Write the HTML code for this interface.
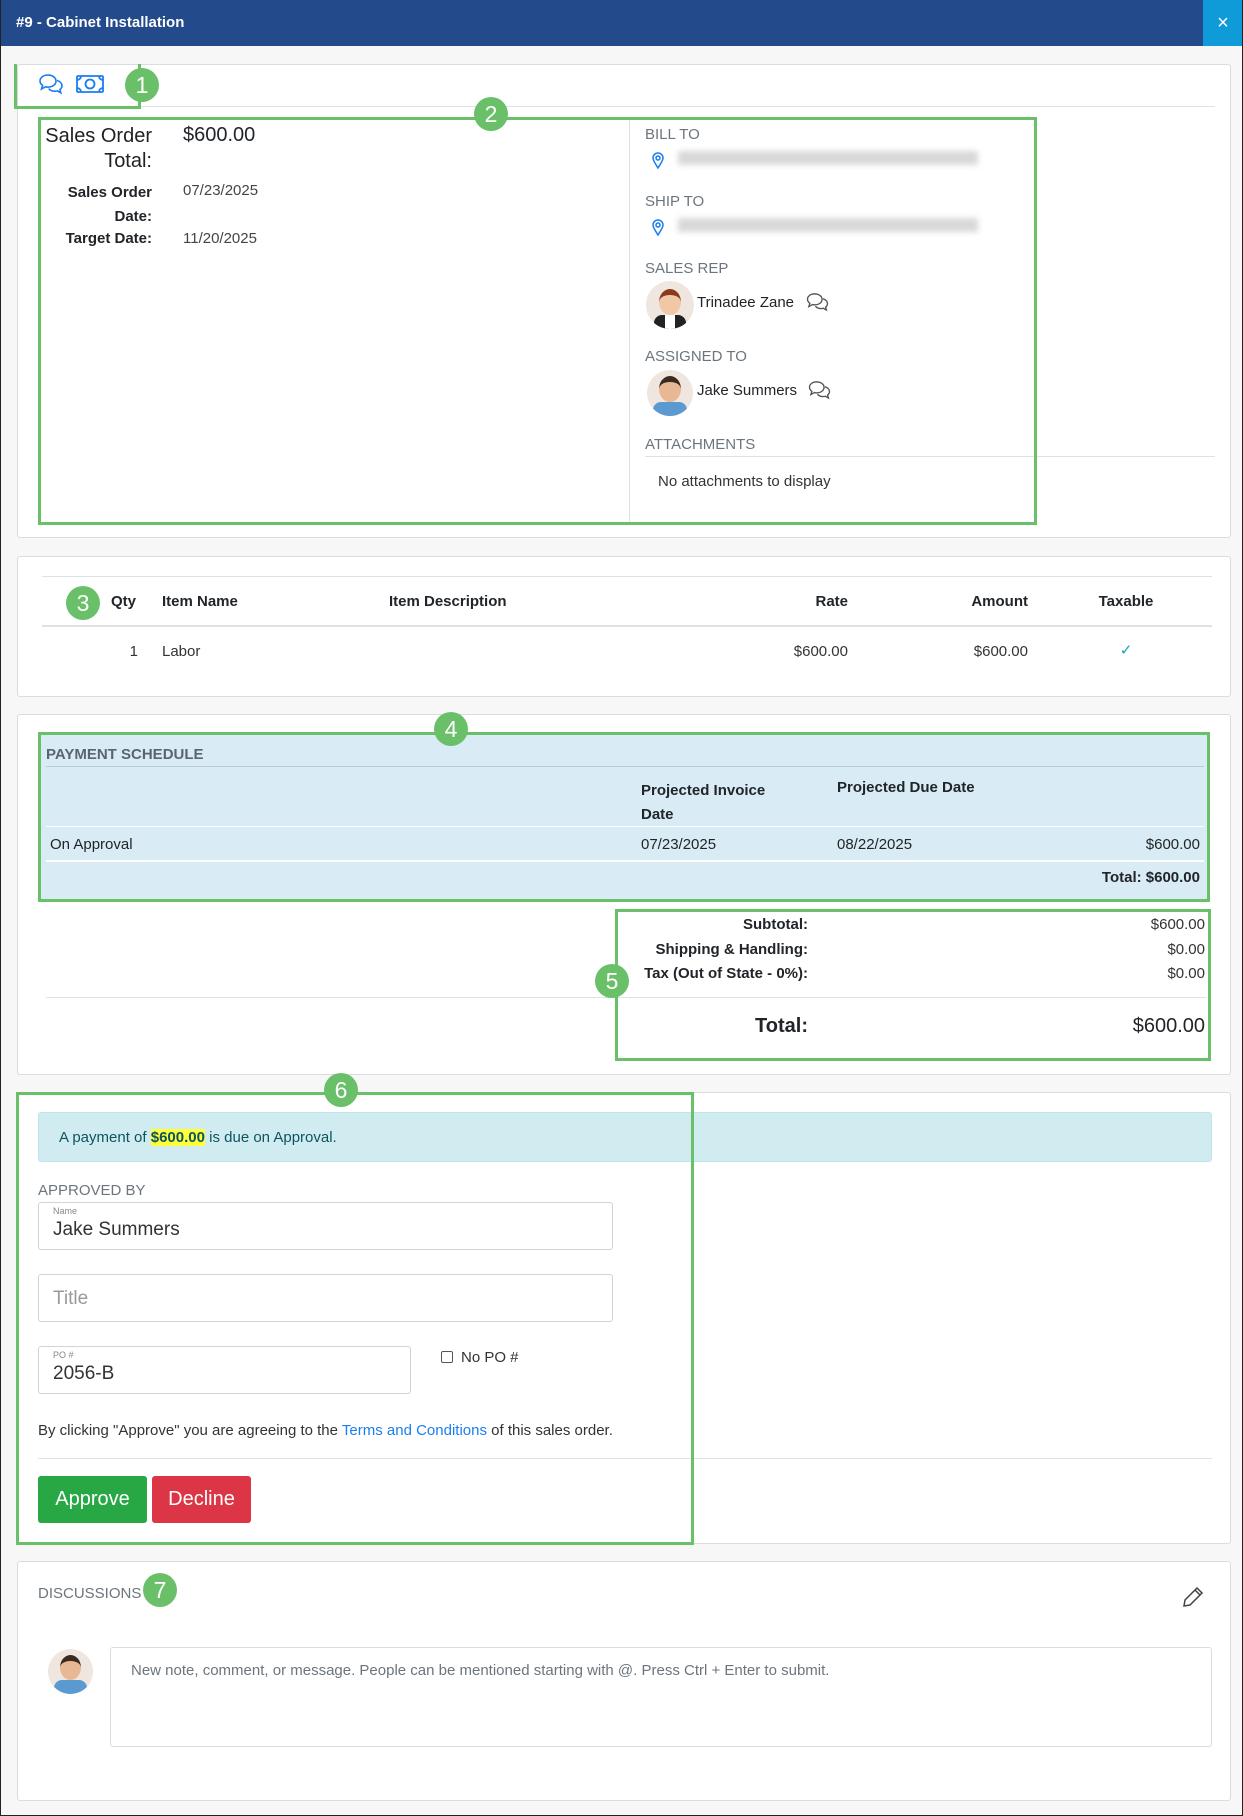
<!DOCTYPE html>
<html><head><meta charset="utf-8"><style>
*{box-sizing:border-box;margin:0;padding:0}
body{width:1243px;height:1816px;background:#f7f7f7;font-family:"Liberation Sans",sans-serif;color:#212529;position:relative;overflow:hidden;font-size:15px}
.a{position:absolute;white-space:nowrap}
.frame{position:absolute;left:0;top:0;width:1243px;height:1816px;border:1px solid #222;border-top:none;pointer-events:none}
.card{position:absolute;background:#fff;border:1px solid #dcdcdc;border-radius:3px}
.g{position:absolute;border:3px solid #6abf69}
.b{position:absolute;width:34px;height:34px;border-radius:50%;background:#6abf69;color:#fff;font-size:23px;text-align:center;line-height:34px}
.lbl{color:#6c757d;font-size:15px}
.hl{position:absolute;height:1px;background:#dee2e6}
.bold{font-weight:bold}
.inp{position:absolute;border:1px solid #ced4da;border-radius:3px;background:#fff}
.av{position:absolute;border-radius:50%;background:#efe6e0;overflow:hidden}
</style></head><body>
<div class="a" style="left:0;top:0;width:1243px;height:46px;background:#234a8a"></div>
<div class="a" style="left:1203px;top:0;width:40px;height:46px;background:#0e9bd8;color:#fff;font-size:20px;text-align:center;line-height:46px">×</div>
<div class="a" style="left:16px;top:14px;color:#fff;font-weight:bold;font-size:15px">#9 - Cabinet Installation</div>

<!-- card 1 -->
<div class="card" style="left:17px;top:64px;width:1214px;height:474px"></div>
<div class="hl" style="left:40px;top:106px;width:1175px"></div>
<svg class="a" style="left:38px;top:73px" width="26" height="22" viewBox="0 0 26 22" fill="none" stroke="#1a7ef0" stroke-width="1.6"><path d="M10 2c-4.5 0-8 2.6-8 6 0 1.8 1 3.3 2.6 4.4L3.5 16l4-2.2c.8.2 1.6.3 2.5.3 4.5 0 8-2.6 8-6s-3.5-6-8-6z"/><path d="M19 7.5c2.9.8 5 2.8 5 5.2 0 1.5-.8 2.9-2.1 3.9l.9 3.2-3.4-1.9c-.8.2-1.6.3-2.4.3-2.7 0-5-1-6.3-2.6"/></svg>
<svg class="a" style="left:76px;top:75px" width="28" height="18" viewBox="0 0 28 18" fill="none" stroke="#1a7ef0" stroke-width="1.8"><rect x="1" y="1" width="26" height="16" rx="1"/><circle cx="14" cy="9" r="4.5"/><path d="M1 5a4 4 0 0 0 4-4M23 1a4 4 0 0 0 4 4M1 13a4 4 0 0 1 4 4M27 13a4 4 0 0 0-4 4"/></svg>
<div class="g" style="left:14px;top:64px;width:127px;height:45px;border-top:none"></div>
<div class="b" style="left:125px;top:68px">1</div>

<div class="a" style="left:629px;top:120px;width:1px;height:404px;background:#dee2e6"></div>
<div class="a bold" style="left:40px;top:124px;width:112px;text-align:right;font-size:20px;line-height:25px;font-weight:normal;color:#222;white-space:normal">Sales Order Total:</div>
<div class="a" style="left:183px;top:124px;font-size:20px">$600.00</div>
<div class="a bold" style="left:40px;top:181px;width:112px;text-align:right;line-height:24px;white-space:normal;font-size:15px">Sales Order Date:</div>
<div class="a" style="left:183px;top:182px;color:#444">07/23/2025</div>
<div class="a bold" style="left:40px;top:230px;width:112px;text-align:right;font-size:15px">Target Date:</div>
<div class="a" style="left:183px;top:230px;color:#444">11/20/2025</div>

<div class="a lbl" style="left:645px;top:126px">BILL TO</div>
<svg class="a" style="left:652px;top:152px" width="12" height="17" viewBox="0 0 12 17" fill="none" stroke="#1a7ef0" stroke-width="1.5"><path d="M6 16C3 11 1 8.5 1 6a5 5 0 0 1 10 0c0 2.5-2 5-5 10z"/><circle cx="6" cy="6" r="2"/></svg>
<div class="a" style="left:678px;top:151px;width:300px;height:14px;background:#d8d8d8;filter:blur(3px)"></div>
<div class="a lbl" style="left:645px;top:193px">SHIP TO</div>
<svg class="a" style="left:652px;top:219px" width="12" height="17" viewBox="0 0 12 17" fill="none" stroke="#1a7ef0" stroke-width="1.5"><path d="M6 16C3 11 1 8.5 1 6a5 5 0 0 1 10 0c0 2.5-2 5-5 10z"/><circle cx="6" cy="6" r="2"/></svg>
<div class="a" style="left:678px;top:218px;width:300px;height:14px;background:#d8d8d8;filter:blur(3px)"></div>
<div class="a lbl" style="left:645px;top:260px">SALES REP</div>
<div class="av" style="left:646px;top:281px;width:48px;height:48px"><div style="position:absolute;left:13px;top:8px;width:22px;height:26px;border-radius:50%;background:#f0c8a8;border-top:6px solid #8b3a1e"></div><div style="position:absolute;left:8px;top:34px;width:32px;height:16px;background:#222;border-radius:8px 8px 0 0"></div><div style="position:absolute;left:19px;top:34px;width:10px;height:16px;background:#fff"></div></div>
<div class="a" style="left:697px;top:294px">Trinadee Zane</div>
<svg class="a" style="left:805px;top:292px" width="25" height="20" viewBox="0 0 26 22" fill="none" stroke="#555" stroke-width="1.5"><path d="M10 2c-4.5 0-8 2.6-8 6 0 1.8 1 3.3 2.6 4.4L3.5 16l4-2.2c.8.2 1.6.3 2.5.3 4.5 0 8-2.6 8-6s-3.5-6-8-6z"/><path d="M19 7.5c2.9.8 5 2.8 5 5.2 0 1.5-.8 2.9-2.1 3.9l.9 3.2-3.4-1.9c-.8.2-1.6.3-2.4.3-2.7 0-5-1-6.3-2.6"/></svg>
<div class="a lbl" style="left:645px;top:348px">ASSIGNED TO</div>
<div class="av" style="left:647px;top:370px;width:46px;height:46px"><div style="position:absolute;left:12px;top:6px;width:22px;height:26px;border-radius:50%;background:#e8b895;border-top:6px solid #3a2a20"></div><div style="position:absolute;left:6px;top:32px;width:34px;height:16px;background:#5a9ad0;border-radius:8px 8px 0 0"></div></div>
<div class="a" style="left:697px;top:382px">Jake Summers</div>
<svg class="a" style="left:807px;top:380px" width="25" height="20" viewBox="0 0 26 22" fill="none" stroke="#555" stroke-width="1.5"><path d="M10 2c-4.5 0-8 2.6-8 6 0 1.8 1 3.3 2.6 4.4L3.5 16l4-2.2c.8.2 1.6.3 2.5.3 4.5 0 8-2.6 8-6s-3.5-6-8-6z"/><path d="M19 7.5c2.9.8 5 2.8 5 5.2 0 1.5-.8 2.9-2.1 3.9l.9 3.2-3.4-1.9c-.8.2-1.6.3-2.4.3-2.7 0-5-1-6.3-2.6"/></svg>
<div class="a lbl" style="left:645px;top:436px">ATTACHMENTS</div>
<div class="hl" style="left:645px;top:456px;width:570px"></div>
<div class="a" style="left:658px;top:473px;color:#333">No attachments to display</div>
<div class="g" style="left:38px;top:117px;width:999px;height:408px"></div>
<div class="b" style="left:474px;top:97px">2</div>

<!-- card 2 -->
<div class="card" style="left:17px;top:556px;width:1214px;height:141px"></div>
<div class="hl" style="left:42px;top:576px;width:1170px"></div>
<div class="a bold" style="left:111px;top:593px">Qty</div>
<div class="a bold" style="left:162px;top:593px">Item Name</div>
<div class="a bold" style="left:389px;top:593px">Item Description</div>
<div class="a bold" style="left:748px;top:593px;width:100px;text-align:right">Rate</div>
<div class="a bold" style="left:908px;top:593px;width:120px;text-align:right">Amount</div>
<div class="a bold" style="left:1076px;top:593px;width:100px;text-align:center">Taxable</div>
<div class="a" style="left:42px;top:625px;width:1170px;height:2px;background:#dee2e6"></div>
<div class="a" style="left:100px;top:643px;width:38px;text-align:right;color:#333">1</div>
<div class="a" style="left:162px;top:643px;color:#333">Labor</div>
<div class="a" style="left:748px;top:643px;width:100px;text-align:right;color:#333">$600.00</div>
<div class="a" style="left:908px;top:643px;width:120px;text-align:right;color:#333">$600.00</div>
<div class="a" style="left:1076px;top:641px;width:100px;text-align:center;color:#17a2b8">✓</div>
<div class="b" style="left:66px;top:586px">3</div>

<!-- card 3 -->
<div class="card" style="left:17px;top:714px;width:1214px;height:361px"></div>
<div class="a" style="left:38px;top:732px;width:1171px;height:169px;background:#d9ecf5"></div>
<div class="a bold" style="left:46px;top:746px;color:#5a6570;font-size:15px">PAYMENT SCHEDULE</div>
<div class="a" style="left:46px;top:766px;width:1158px;height:1px;background:#b9cbd6"></div>
<div class="a bold" style="left:641px;top:779px;line-height:24px">Projected Invoice<br>Date</div>
<div class="a bold" style="left:837px;top:779px">Projected Due Date</div>
<div class="a" style="left:46px;top:826px;width:1158px;height:1px;background:#fff"></div>
<div class="a" style="left:50px;top:836px">On Approval</div>
<div class="a" style="left:641px;top:836px">07/23/2025</div>
<div class="a" style="left:837px;top:836px">08/22/2025</div>
<div class="a" style="left:1100px;top:836px;width:100px;text-align:right">$600.00</div>
<div class="a" style="left:46px;top:860px;width:1158px;height:2px;background:#fff"></div>
<div class="a bold" style="left:1000px;top:869px;width:200px;text-align:right">Total: $600.00</div>
<div class="g" style="left:38px;top:732px;width:1172px;height:170px;background:none"></div>
<div class="b" style="left:434px;top:712px">4</div>

<div class="a bold" style="left:600px;top:913px;width:208px;text-align:right;line-height:24.5px">Subtotal:<br>Shipping &amp; Handling:<br>Tax (Out of State - 0%):</div>
<div class="a" style="left:1100px;top:913px;width:105px;text-align:right;line-height:24.5px;color:#333">$600.00<br>$0.00<br>$0.00</div>
<div class="hl" style="left:46px;top:997px;width:1160px"></div>
<div class="a bold" style="left:700px;top:1015px;width:108px;text-align:right;font-size:20px">Total:</div>
<div class="a" style="left:1080px;top:1015px;width:125px;text-align:right;font-size:20px">$600.00</div>
<div class="g" style="left:615px;top:909px;width:596px;height:152px"></div>
<div class="b" style="left:595px;top:964px">5</div>

<!-- card 4 -->
<div class="card" style="left:17px;top:1092px;width:1214px;height:452px"></div>
<div class="a" style="left:38px;top:1112px;width:1174px;height:50px;background:#d1ecf1;border:1px solid #bee5eb;border-radius:3px"></div>
<div class="a" style="left:59px;top:1129px;color:#0c5460">A payment of <b style="background:#ffff3a">$600.00</b> is due on Approval.</div>
<div class="a lbl" style="left:38px;top:1182px">APPROVED BY</div>
<div class="inp" style="left:38px;top:1202px;width:575px;height:48px"><div class="a" style="left:14px;top:3px;font-size:9px;color:#888">Name</div><div class="a" style="left:14px;top:16px;font-size:19px;color:#333">Jake Summers</div></div>
<div class="inp" style="left:38px;top:1274px;width:575px;height:48px"><div class="a" style="left:14px;top:13px;font-size:19px;color:#999">Title</div></div>
<div class="inp" style="left:38px;top:1346px;width:373px;height:48px"><div class="a" style="left:14px;top:3px;font-size:9px;color:#888">PO #</div><div class="a" style="left:14px;top:16px;font-size:19px;color:#333">2056-B</div></div>
<div class="a" style="left:441px;top:1351px;width:12px;height:12px;border:1px solid #555;border-radius:2px;background:#fff"></div>
<div class="a" style="left:461px;top:1349px;color:#333">No PO #</div>
<div class="a" style="left:38px;top:1422px;color:#333">By clicking "Approve" you are agreeing to the <span style="color:#1a7ef0">Terms and Conditions</span> of this sales order.</div>
<div class="hl" style="left:38px;top:1458px;width:1174px"></div>
<div class="a" style="left:38px;top:1476px;width:109px;height:47px;background:#28a745;color:#fff;font-size:20px;text-align:center;line-height:47px;border-radius:3px">Approve</div>
<div class="a" style="left:152px;top:1476px;width:99px;height:47px;background:#dc3545;color:#fff;font-size:20px;text-align:center;line-height:47px;border-radius:3px">Decline</div>
<div class="g" style="left:16px;top:1092px;width:678px;height:453px"></div>
<div class="b" style="left:324px;top:1073px">6</div>

<!-- card 5 -->
<div class="card" style="left:17px;top:1561px;width:1214px;height:240px"></div>
<div class="a lbl" style="left:38px;top:1585px">DISCUSSIONS</div>
<div class="b" style="left:143px;top:1573px">7</div>
<svg class="a" style="left:1182px;top:1586px" width="22" height="22" viewBox="0 0 22 22" fill="none" stroke="#444" stroke-width="1.5"><path d="M15 2l5 5L8 19l-6 1 1-6z"/><path d="M13 4l5 5"/></svg>
<div class="av" style="left:48px;top:1649px;width:45px;height:45px"><div style="position:absolute;left:12px;top:6px;width:21px;height:25px;border-radius:50%;background:#e8b895;border-top:6px solid #3a2a20"></div><div style="position:absolute;left:6px;top:31px;width:33px;height:16px;background:#5a9ad0;border-radius:8px 8px 0 0"></div></div>
<div class="a" style="left:110px;top:1647px;width:1102px;height:100px;border:1px solid #dcdcdc;border-radius:3px;background:#fff"></div>
<div class="a" style="left:131px;top:1662px;color:#6c757d">New note, comment, or message. People can be mentioned starting with @. Press Ctrl + Enter to submit.</div>
<div class="frame"></div>
</body></html>
